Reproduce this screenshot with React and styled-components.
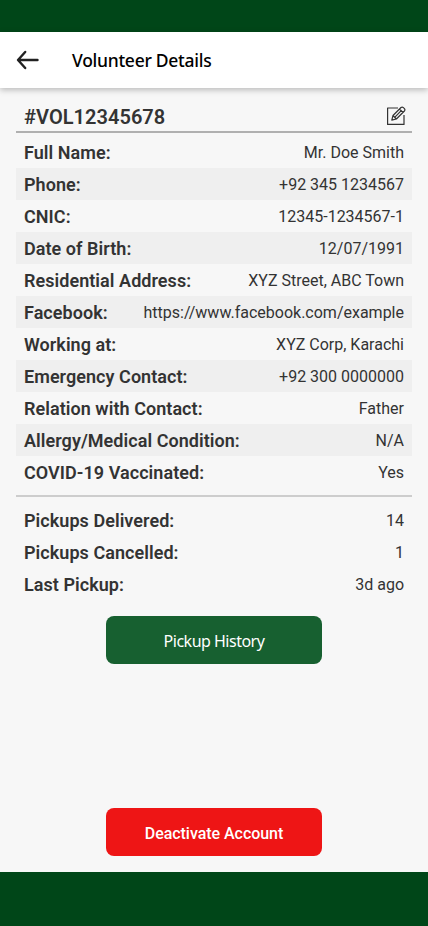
import React from "react";
import styled, { createGlobalStyle } from "styled-components";

const GlobalStyle = createGlobalStyle`
  * { box-sizing: border-box; }
  body { margin: 0; background: #f7f7f7; font-family: Roboto, sans-serif; }
`;

const Screen = styled.div`
  width: 100%;
  height: 926px;
  display: flex;
  flex-direction: column;
  background: #f7f7f7;
  color: #333;
`;

const SystemBar = styled.div`
  height: ${(p) => p.$height};
  flex: none;
  background: #004618;
`;

const AppBar = styled.header`
  height: 56px;
  flex: none;
  display: flex;
  align-items: center;
  gap: 32px;
  padding: 0 16px;
  background: #fff;
  box-shadow: 0 2px 6px rgba(0, 0, 0, 0.25);
`;

const BackButton = styled.button`
  width: 24px;
  height: 24px;
  padding: 0;
  border: 0;
  background: none;
  display: flex;
`;

const Title = styled.h1`
  margin: 0;
  font: 500 17.5px/24px "Noto Sans", sans-serif;
  letter-spacing: -0.27px;
  color: #000;
`;

const Content = styled.main`
  flex: 1;
  display: flex;
  flex-direction: column;
  align-items: center;
  padding: 12px 16px 16px;
`;

const IdRow = styled.div`
  width: 100%;
  height: 33px;
  display: flex;
  align-items: center;
  justify-content: space-between;
  padding: 0 6px 0 8px;
  border-bottom: 2px solid #b0b0b0;
`;

const VolunteerId = styled.h2`
  margin: 0;
  padding-top: 2px;
  font-size: 20px;
  font-weight: 600;
  line-height: 24px;
  letter-spacing: 0.04px;
`;

const List = styled.dl`
  width: 100%;
  margin: 0;
  padding: ${(p) => p.$padding};
  border-bottom: ${(p) => (p.$divided ? "2px solid #cdcdcd" : "0")};
`;

const Row = styled.div`
  height: 32px;
  display: flex;
  align-items: center;
  justify-content: space-between;
  padding: 0 8px;
  background: ${(p) => (p.$shaded ? "#efefef" : "transparent")};
`;

const Label = styled.dt`
  font-size: 18px;
  font-weight: 600;
  letter-spacing: 0.05px;
  white-space: nowrap;
`;

const Value = styled.dd`
  margin: 0;
  font-size: 16px;
  white-space: nowrap;
`;

const Button = styled.button`
  width: 216px;
  height: 48px;
  flex: none;
  margin-top: ${(p) => p.$top};
  padding: 3px 0 0;
  border: 0;
  border-radius: 8px;
  background: ${(p) => p.$color};
  color: #fff;
  font: ${(p) => p.$font};
  letter-spacing: ${(p) => p.$spacing || "normal"};
`;

const HistoryButton = styled(Button)`
  padding-top: 1px;
`;

const details = [
  ["Full Name:", "Mr. Doe Smith"],
  ["Phone:", "+92 345 1234567"],
  ["CNIC:", "12345-1234567-1"],
  ["Date of Birth:", "12/07/1991"],
  ["Residential Address:", "XYZ Street, ABC Town"],
  ["Facebook:", "https://www.facebook.com/example"],
  ["Working at:", "XYZ Corp, Karachi"],
  ["Emergency Contact:", "+92 300 0000000"],
  ["Relation with Contact:", "Father"],
  ["Allergy/Medical Condition:", "N/A"],
  ["COVID-19 Vaccinated:", "Yes"],
];

const pickups = [
  ["Pickups Delivered:", "14"],
  ["Pickups Cancelled:", "1"],
  ["Last Pickup:", "3d ago"],
];

const BackIcon = () => (
  <svg width="24" height="24" viewBox="0 0 24 24" fill="none" stroke="#212121" strokeWidth="2.4" strokeLinecap="round" strokeLinejoin="round">
    <path d="M9.2 4 2 12l7.2 8M2.5 12H21.5" />
  </svg>
);

const EditIcon = () => (
  <svg width="20" height="20" viewBox="0 0 20 20" fill="none" stroke="#333" strokeWidth="1.2" strokeLinejoin="round">
    <path d="M12 2H1.6v16.4H18V9" />
    <path d="m5.8 14.2 1.2-4.7 8-8q1.2-1 2.4.1l1 1q1 1.2 0 2.4l-8 8zM7 9.5l3.4 3.5M13.5 3l3.5 3.5M8.7 11.3 15.2 4.7" />
  </svg>
);

export default function App() {
  return (
    <Screen>
      <GlobalStyle />
      <SystemBar $height="32px" />
      <AppBar>
        <BackButton aria-label="Back"><BackIcon /></BackButton>
        <Title>Volunteer Details</Title>
      </AppBar>
      <Content>
        <IdRow>
          <VolunteerId>#VOL12345678</VolunteerId>
          <EditIcon />
        </IdRow>
        <List $padding="3px 0 7px" $divided>
          {details.map(([label, value], i) => (
            <Row key={label} $shaded={i % 2 === 1}>
              <Label>{label}</Label>
              <Value>{value}</Value>
            </Row>
          ))}
        </List>
        <List $padding="7px 0 0">
          {pickups.map(([label, value]) => (
            <Row key={label}>
              <Label>{label}</Label>
              <Value>{value}</Value>
            </Row>
          ))}
        </List>
        <HistoryButton $top="16px" $color="#176030" $font='400 16px/24px "Noto Sans", sans-serif' $spacing="-0.5px">Pickup History</HistoryButton>
        <Button $top="auto" $color="#ee1515" $font="500 16px/24px Roboto, sans-serif" $spacing="-0.04px">Deactivate Account</Button>
      </Content>
      <SystemBar $height="54px" />
    </Screen>
  );
}
